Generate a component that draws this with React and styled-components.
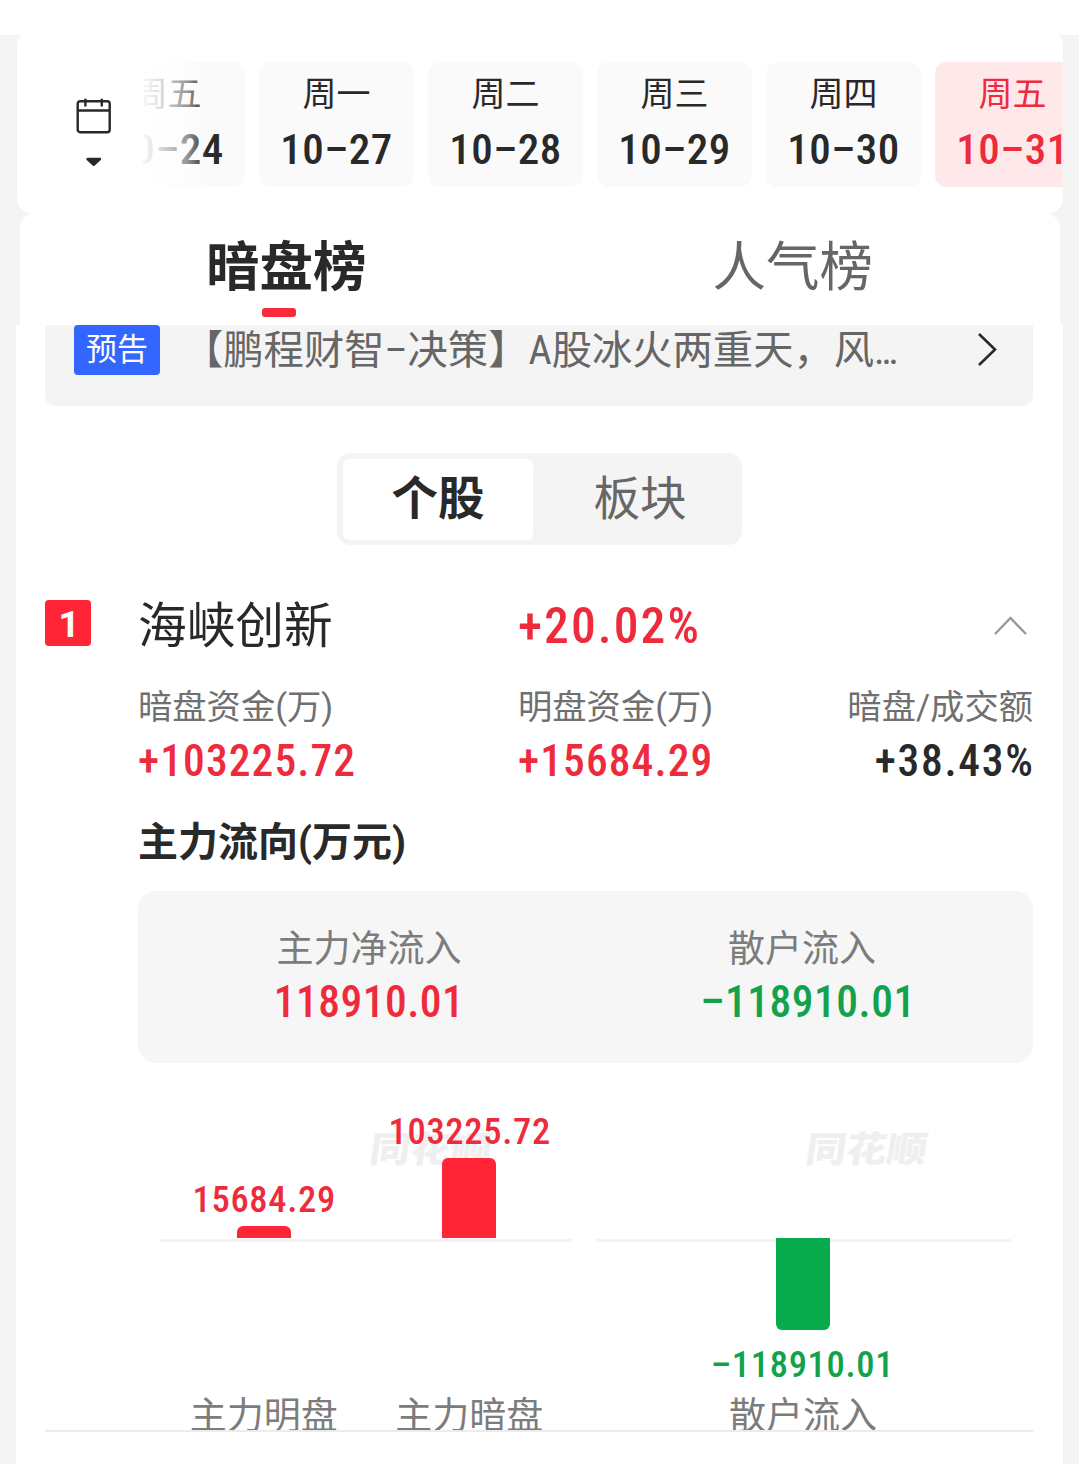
import React, { useState } from 'react';
import styled, { createGlobalStyle, css } from 'styled-components';

const GlobalStyle = createGlobalStyle`
    * {
        box-sizing: border-box;
    }
    body {
        margin: 0;
        background: #f4f4f4;
        color: #292929;
        font-family: Roboto, "Noto Sans CJK SC", sans-serif;
    }
`;

const RED = '#ee2b3c';
const GREEN = '#12a24c';

// 数字统一用窄体
const numeric = css`
    font-weight: 500;
    font-stretch: 85%;
`;

const Page = styled.div`
    width: 1079px;
    height: 1464px;
    overflow: hidden;
`;

const TopStrip = styled.div`
    height: 35px;
    background: #fff;
`;

/* 日期选择 */
const DateCard = styled.section`
    display: flex;
    height: 184px;
    margin: -5px 16px 0 17px;
    padding-top: 32px;
    background: #fff;
    border-radius: 16px;
`;

const CalendarButton = styled.div`
    flex: none;
    width: 126px;
    padding: 36px 0 0 59px;

    svg {
        display: block;
    }
`;

const DateScroller = styled.div`
    position: relative;
    flex: 1;
    display: flex;
    gap: 14px;
    overflow: hidden;

    &::before {
        content: '';
        position: absolute;
        left: 0;
        top: 0;
        width: 64px;
        height: 125px;
        background: linear-gradient(to right, rgba(255, 255, 255, 0.96), rgba(255, 255, 255, 0.85) 25%, rgba(255, 255, 255, 0.5) 70%, rgba(255, 255, 255, 0));
    }
`;

const DateItem = styled.div`
    flex: none;
    width: 155px;
    height: 125px;
    border-radius: 12px;
    text-align: center;
    background: ${props => (props.$active ? '#ffe8ea' : '#fafafa')};
    color: ${props => (props.$active ? RED : 'inherit')};
    cursor: pointer;

    &:first-child {
        margin-left: -53px;
    }
`;

const Weekday = styled.div`
    height: 60px;
    font-size: 34px;
    line-height: 64px;
`;

const DateText = styled.div`
    ${numeric}
    font-size: 43px;
    line-height: 55px;
    letter-spacing: 0.5px;
`;

/* 榜单切换 */
const TabBar = styled.nav`
    display: flex;
    height: 111px;
    margin: 0 19px 0 20px;
    padding: 0 14px 0 13px;
    background: #fff;
    border-radius: 14px 14px 0 0;
`;

const Tab = styled.div`
    flex: 1;
    display: flex;
    flex-direction: column;
    align-items: center;
    font-size: 53.5px;
    line-height: 107px;
    color: #666;
    cursor: pointer;

    ${props => props.$active && css`
        color: #292929;
        font-weight: 700;

        &::after {
            content: '';
            width: 34px;
            height: 9px;
            margin: -13px 14px 0 0;
            border-radius: 3px;
            background: #fb2a3b;
        }
    `}
`;

const Content = styled.main`
    height: 1139px;
    margin: 0 16px;
    padding: 0 30px 0 29px;
    background: #fff;
`;

const Notice = styled.div`
    display: flex;
    height: 81px;
    padding-left: 29px;
    background: #f4f4f4;
    border-radius: 0 0 10px 10px;
`;

const NoticeTag = styled.span`
    flex: none;
    width: 86px;
    height: 50px;
    border-radius: 4px;
    background: #3366ff;
    color: #fff;
    font-size: 31px;
    line-height: 50px;
    text-align: center;
`;

const NoticeText = styled.span`
    flex: none;
    width: 817px;
    padding-left: 23px;
    color: #666;
    font-size: 40.3px;
    font-stretch: 85%;
    line-height: 52px;
    white-space: nowrap;
`;

const NoticeArrow = styled.svg`
    width: 20px;
    height: 36px;
    margin-top: 7px;
`;

const Segment = styled.div`
    display: flex;
    gap: 12px;
    width: 405px;
    height: 92px;
    margin: 47px auto 0;
    padding: 6px;
    background: #f4f4f4;
    border-radius: 14px;
`;

const SegmentItem = styled.div`
    width: 190px;
    height: 81px;
    padding-left: 1px;
    border-radius: 6px;
    font-size: 46.5px;
    line-height: 81px;
    text-align: center;
    cursor: pointer;
    color: ${props => (props.$active ? '#292929' : '#666')};
    font-weight: ${props => (props.$active ? 700 : 400)};
    background: ${props => (props.$active ? '#fff' : 'transparent')};
`;

/* 个股 */
const Stock = styled.article`
    display: grid;
    grid-template-columns: 93px 1fr;
    height: 887px;
    overflow: hidden;
    border-bottom: 2px solid #ececec;
`;

const Rank = styled.span`
    width: 46px;
    height: 46px;
    margin-top: 55px;
    padding-left: 2px;
    border-radius: 4px;
    background: #ff2436;
    color: #fff;
    font-size: 37px;
    line-height: 49px;
    font-weight: 700;
    text-align: center;
`;

const StockHead = styled.header`
    display: flex;
    align-items: center;
    height: 58px;
    margin-top: 52px;
`;

const StockName = styled.span`
    width: 380px;
    padding-top: 1px;
    font-size: 48.7px;
    line-height: 60px;
`;

const Change = styled.span`
    ${numeric}
    flex: 1;
    color: ${RED};
    font-size: 49.5px;
    line-height: 58px;
    letter-spacing: 2.1px;
`;

const Funds = styled.div`
    display: grid;
    grid-template-columns: 380px 1fr auto;
    margin-top: 24px;
`;

const FundLabel = styled.div`
    font-size: 34.3px;
    line-height: 56px;
    color: #707070;
`;

const Amount = styled.div`
    ${numeric}
    font-size: 43.5px;
    line-height: 54px;
    color: ${props => props.$color || '#292929'};
`;

const Fund = styled.div`
    text-align: ${props => (props.$right ? 'right' : 'left')};

    ${Amount} {
        letter-spacing: ${props => (props.$right ? '1.7px' : '1.1px')};
        margin-right: ${props => (props.$right ? '-1.5px' : '0')};
    }
`;

const FlowTitle = styled.h3`
    margin: 24px 0 0;
    font-size: 40px;
    line-height: 60px;
    font-weight: 700;
`;

const FlowPanel = styled.div`
    display: grid;
    grid-template-columns: 432px 434px;
    height: 172px;
    margin-top: 18px;
    padding: 31px 0 0 15px;
    background: #f6f6f6;
    border-radius: 18px;
    text-align: center;

    ${Amount} {
        line-height: 49px;
        letter-spacing: 0.5px;
    }
`;

const RetailAmount = styled(Amount)`
    padding-left: 12px;
`;

const FlowLabel = styled.div`
    font-size: 37px;
    line-height: 56px;
    color: #7c7c7c;
`;

const Charts = styled.div`
    display: grid;
    grid-template-columns: 412px 415px;
    gap: 24px;
    padding: 0 22px;
`;

const Chart = styled.div`
    position: relative;
    display: flex;
    height: 380px;

    &:first-child {
        padding-left: 1px;
    }

    &:last-child {
        padding-right: 1px;
    }
`;

const Watermark = styled.span`
    position: absolute;
    left: 210px;
    top: 64px;
    color: #efefef;
    font-size: 40.5px;
    line-height: 46px;
    font-weight: 900;
    transform: skewX(-8deg) scaleY(0.88);
`;

/* 0轴 */
const Axis = styled.i`
    position: absolute;
    left: 0;
    right: 0;
    top: 176px;
    height: 3px;
    background: #f4f4f4;
`;

const BarColumn = styled.div`
    position: relative;
    flex: 1;
    display: grid;
    grid-template-rows: 175px 151px 56px;
    justify-items: center;
`;

const Half = styled.div`
    display: flex;
    flex-direction: column;
    align-items: center;
    justify-content: ${props => (props.$up ? 'flex-end' : 'flex-start')};
`;

const Bar = styled.div`
    width: 54px;
    background: ${props => (props.$up ? '#ff2436' : '#07ab4b')};
    border-radius: ${props => (props.$up ? '6px 6px 0 0' : '0 0 6px 6px')};
`;

const BarValue = styled.span`
    ${numeric}
    padding: ${props => (props.$up ? '0 0 6px 1px' : '15px 1px 0 0')};
    font-size: 36.5px;
    line-height: 40px;
    letter-spacing: 0.7px;
    color: ${props => (props.$up ? RED : GREEN)};
`;

const dates = [
    { week: '周五', date: '10–24' },
    { week: '周一', date: '10–27' },
    { week: '周二', date: '10–28' },
    { week: '周三', date: '10–29' },
    { week: '周四', date: '10–30' },
    { week: '周五', date: '10–31' },
];

const charts = [
    [
        { name: '主力明盘', value: 15684.29 },
        { name: '主力暗盘', value: 103225.72 },
    ],
    [{ name: '散户流入', value: -118910.01 }],
];

const format = value => value.toFixed(2).replace('-', '–');
const barHeight = value => Math.round(Math.abs(value) / 1290);

function BarItem({ name, value }) {
    const up = value >= 0;
    const bar = <Bar $up={up} style={{ height: barHeight(value) }} />;
    const text = <BarValue $up={up}>{format(value)}</BarValue>;

    return (
        <BarColumn>
            <Half $up>{up && <>{text}{bar}</>}</Half>
            <Half>{!up && <>{bar}{text}</>}</Half>
            <FlowLabel>{name}</FlowLabel>
        </BarColumn>
    );
}

function App() {
    const [day, setDay] = useState(5);
    const [tab, setTab] = useState('暗盘榜');
    const [type, setType] = useState('个股');

    return (
        <Page>
            <GlobalStyle />
            <TopStrip />
            <DateCard>
                <CalendarButton>
                    <svg width="36" height="72" viewBox="0 0 36 72" fill="none" stroke="#292929" strokeWidth="2.4">
                        <rect x="1.7" y="3.2" width="32" height="31" rx="2.5" />
                        <path d="M1.7 12.5H33.7M9.4 0.8V8.5M25.8 0.8V8.5" />
                        <path d="M11.5 61H24L17.7 66.8Z" fill="#292929" strokeLinejoin="round" />
                    </svg>
                </CalendarButton>
                <DateScroller>
                    {dates.map((item, i) => (
                        <DateItem key={item.date} $active={day === i} onClick={() => setDay(i)}>
                            <Weekday>{item.week}</Weekday>
                            <DateText>{item.date}</DateText>
                        </DateItem>
                    ))}
                </DateScroller>
            </DateCard>

            <TabBar>
                {['暗盘榜', '人气榜'].map(name => (
                    <Tab key={name} $active={tab === name} onClick={() => setTab(name)}>{name}</Tab>
                ))}
            </TabBar>

            <Content>
                <Notice>
                    <NoticeTag>预告</NoticeTag>
                    <NoticeText>【鹏程财智–决策】A股冰火两重天，风…</NoticeText>
                    <NoticeArrow viewBox="0 0 20 36" fill="none" stroke="#292929" strokeWidth="2.6">
                        <path d="M2 2L18 17.5L2 33" />
                    </NoticeArrow>
                </Notice>

                <Segment>
                    {['个股', '板块'].map(name => (
                        <SegmentItem key={name} $active={type === name} onClick={() => setType(name)}>{name}</SegmentItem>
                    ))}
                </Segment>

                <Stock>
                    <Rank>1</Rank>
                    <div>
                        <StockHead>
                            <StockName>海峡创新</StockName>
                            <Change>+20.02%</Change>
                            <svg width="45" height="20" viewBox="0 0 45 20" fill="none" stroke="#999" strokeWidth="2.4">
                                <path d="M7 18L22.5 2L38 18" />
                            </svg>
                        </StockHead>
                        <Funds>
                            <Fund>
                                <FundLabel>暗盘资金(万)</FundLabel>
                                <Amount $color={RED}>+103225.72</Amount>
                            </Fund>
                            <Fund>
                                <FundLabel>明盘资金(万)</FundLabel>
                                <Amount $color={RED}>+15684.29</Amount>
                            </Fund>
                            <Fund $right>
                                <FundLabel>暗盘/成交额</FundLabel>
                                <Amount>+38.43%</Amount>
                            </Fund>
                        </Funds>
                        <FlowTitle>主力流向(万元)</FlowTitle>
                        <FlowPanel>
                            <div>
                                <FlowLabel>主力净流入</FlowLabel>
                                <Amount $color={RED}>118910.01</Amount>
                            </div>
                            <div>
                                <FlowLabel>散户流入</FlowLabel>
                                <RetailAmount $color={GREEN}>–118910.01</RetailAmount>
                            </div>
                        </FlowPanel>
                        <Charts>
                            {charts.map((bars, i) => (
                                <Chart key={i}>
                                    <Watermark>同花顺</Watermark>
                                    <Axis />
                                    {bars.map(bar => <BarItem key={bar.name} {...bar} />)}
                                </Chart>
                            ))}
                        </Charts>
                    </div>
                </Stock>
            </Content>
        </Page>
    );
}

export default App;
